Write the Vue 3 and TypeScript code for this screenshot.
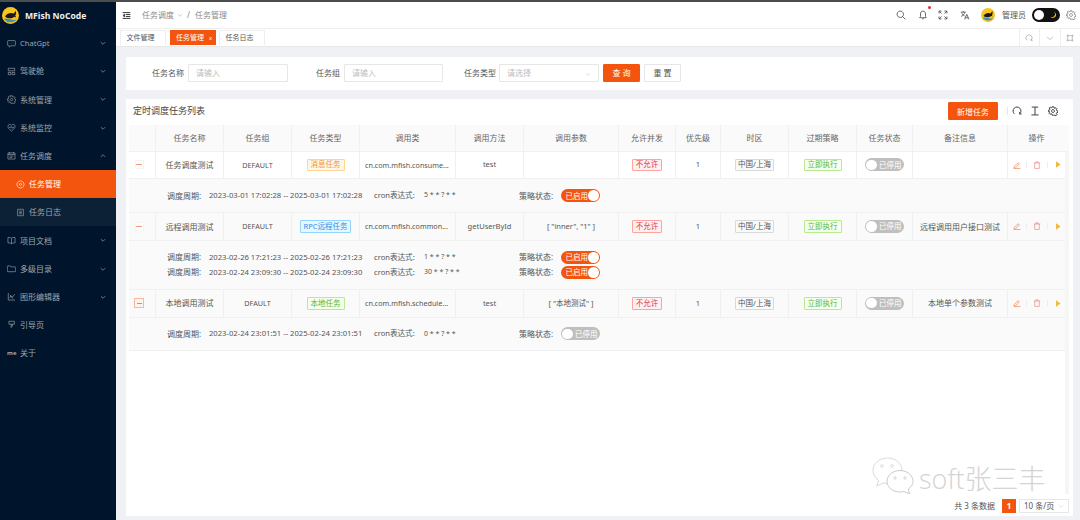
<script setup lang="ts">
interface MenuItem { label: string; icon: string; arrow?: 'down' | 'up'; kind?: 'active' | 'sub' }
interface Detail { range: string; cron: string; on: boolean }
interface Row {
  name: string; group: string; tag: string; tagKind: string; cls: string; method: string;
  params: string; note: string; boxed: boolean; stripe: boolean; details: Detail[]
}
const icons: Record<string, string> = {
  chat: 'M2 2.5h10a1 1 0 0 1 1 1v6a1 1 0 0 1-1 1H6l-2.5 2v-2H2a1 1 0 0 1-1-1v-6a1 1 0 0 1 1-1zM4.5 6.5h.5M7 6.5h.5M9.5 6.5h.5',
  dash: 'M2 2h10v4H2zM2 8.5h4V12H2zM8 8.5h4V12H8z',
  gear: 'M6 1h2l.4 1.700 1.300.5 1.500-.9 1.400 1.400-.9 1.500.5 1.300 1.700.5v2l-1.700.4-.5 1.300.9 1.500-1.400 1.400-1.500-.9-1.300.5L8 13H6l-.4-1.700-1.300-.5-1.500.9-1.400-1.400.9-1.500-.5-1.300L.6 8V6l1.700-.4.5-1.300-.9-1.500 1.400-1.400 1.500.9 1.300-.5zM7 5a2 2 0 1 0 .01 0z',
  heart: 'M7 12.5C3 9.5 1.5 7.500 1.500 5.200A3 3 0 0 1 7 3.500a3 3 0 0 1 5.500 1.700C12.500 7.500 11 9.500 7 12.500zM3 6.800h2.500l1-1.500 1.500 3 1-1.500H11',
  cal: 'M1.500 3h11v9.500h-11zM4 1.500V4M10 1.500V4M1.500 5.500h11M4 8h6M4 10.300h4',
  target: 'M7 1.500a5.500 5.500 0 1 0 .01 0zM7 5.500a1.500 1.500 0 1 0 .01 0z',
  log: 'M2.500 2h9v10h-9zM5 5h4M5 7h4M5 9h4',
  book: 'M7 3.500C5.500 2.300 3.500 2 1.500 2.300v8.500c2-.3 4 0 5.500 1.200 1.500-1.200 3.500-1.500 5.500-1.200V2.300C10.500 2 8.500 2.300 7 3.500zM7 3.500V12',
  folder: 'M1.500 3h4l1.200 1.500h5.800a1 1 0 0 1 1 1V11a1 1 0 0 1-1 1h-11a1 1 0 0 1-1-1V3.500z',
  chart: 'M2 1.500V12.500H12.500M4 9l2.500-3 2 2L12 3.500M9 10.500l-4-6',
  guide: 'M3 2h8.500v4.500H3zM6.500 6.500V12.500M8.500 6.500V9.500H6.500',
  menu: 'M1 2.500h12M6 5.500h7M6 8.500h7M1 11.500h12M4 5L1.500 7 4 9z',
  search: 'M6 1.500a4.500 4.500 0 1 0 .01 0zM9.300 9.300L13 13',
  bell: 'M7 1.500c-2.500 0-3.500 2-3.500 4V9L2.300 10.800h9.400L10.500 9V5.500c0-2-1-4-3.500-4zM5.800 12.300h2.400',
  full: 'M1.500 5V1.500H5M1.500 1.500L5 5M12.500 5V1.500H9M12.500 1.500L9 5M1.500 9v3.500H5M1.500 12.500L5 9M12.500 9v3.500H9M12.500 12.500L9 9',
  lang: 'M1 3h7M4.500 1.500V3M7 3C6.300 5.500 4 8 1.500 9M2.500 4.500C3.500 6.500 5 7.700 6.500 8.500M6.500 13l3-7 3 7M7.500 11h4',
  redo: 'M3.300 11A5.500 5.500 0 1 1 10.700 11M10.700 8.500V11.300H13.300',
  down: 'M2 5l5 5 5-5',
  frame: 'M3 3h8v8H3zM1 3h2V1M13 3h-2V1M1 11h2v2M13 11h-2v2',
  height: 'M2.500 1.500h9M7 1.500v11M2 12.500h10',
  edit: 'M2 9.800L8.800 3l2.200 2.200-6.800 6.800H2zM1 13.300h12',
  trash: 'M1.500 3.500h11M5 3.500V1.500h4v2M3 3.500v9.500h8V3.500'
}
const menu: MenuItem[] = [
  { label: 'ChatGpt', icon: 'chat', arrow: 'down' },
  { label: '驾驶舱', icon: 'dash', arrow: 'down' },
  { label: '系统管理', icon: 'gear', arrow: 'down' },
  { label: '系统监控', icon: 'heart', arrow: 'down' },
  { label: '任务调度', icon: 'cal', arrow: 'up' },
  { label: '任务管理', icon: 'target', kind: 'active' },
  { label: '任务日志', icon: 'log', kind: 'sub' },
  { label: '项目文档', icon: 'book', arrow: 'down' },
  { label: '多级目录', icon: 'folder', arrow: 'down' },
  { label: '图形编辑器', icon: 'chart', arrow: 'down' },
  { label: '引导页', icon: 'guide' },
  { label: '关于', icon: 'me' }
]
const columns: string[] = ['', '任务名称', '任务组', '任务类型', '调用类', '调用方法', '调用参数', '允许并发', '优先级', '时区', '过期策略', '任务状态', '备注信息', '操作']
const rows: Row[] = [
  { name: '任务调度测试', group: 'DEFAULT', tag: '消息任务', tagKind: 'orange', cls: 'cn.com.mfish.consume...', method: 'test', params: '', note: '', boxed: false, stripe: false,
    details: [{ range: '2023-03-01 17:02:28 -- 2025-03-01 17:02:28', cron: '5 * * ? * *', on: true }] },
  { name: '远程调用测试', group: 'DEFAULT', tag: 'RPC远程任务', tagKind: 'blue', cls: 'cn.com.mfish.common...', method: 'getUserById', params: '[ "inner", "1" ]', note: '远程调用用户接口测试', boxed: false, stripe: true,
    details: [
      { range: '2023-02-26 17:21:23 -- 2025-02-26 17:21:23', cron: '1 * * ? * *', on: true },
      { range: '2023-02-24 23:09:30 -- 2025-02-24 23:09:30', cron: '30 * * ? * *', on: true }
    ] },
  { name: '本地调用测试', group: 'DFAULT', tag: '本地任务', tagKind: 'green', cls: 'cn.com.mfish.schedule...', method: 'test', params: '[ "本地测试" ]', note: '本地单个参数测试', boxed: true, stripe: true,
    details: [{ range: '2023-02-24 23:01:51 -- 2025-02-24 23:01:51', cron: '0 * * ? * *', on: false }] }
]
</script>

<template>
  <div class="page">
    <aside class="side">
      <div class="logo">
        <svg class="fish" viewBox="0 0 18 18">
          <circle cx="9" cy="9" r="9" fill="#f7c51e" />
          <path d="M2 13c2.500-1.300 4-1 7 0s5 .8 7-.3A9 9 0 0 1 2 13z" fill="#3e8fc2" />
          <path d="M3.500 9.500C5.500 6.500 9.500 5.500 12.500 7l2-3 .5 3.500-1 1.500 1 2-2-.8c-2.500 2-6 2.300-9.500.3z" fill="#1a1a1a" />
        </svg>
        <span class="logo-text">MFish NoCode</span>
      </div>
      <div v-for="m in menu" :key="m.label" class="mi" :class="m.kind">
        <span v-if="m.icon === 'me'" class="me">me</span>
        <svg v-else class="mi-icon" viewBox="0 0 14 14"><path :d="icons[m.icon]" /></svg>
        <span class="mi-label" :class="{ latin: m.label === 'ChatGpt' }">{{ m.label }}</span>
        <svg v-if="m.arrow" class="mi-arrow" :class="{ up: m.arrow === 'up' }" viewBox="0 0 14 14"><path :d="icons.down" /></svg>
      </div>
    </aside>

    <main class="main">
      <header class="top">
        <svg class="ic9 menu-ic" viewBox="0 0 14 14"><path :d="icons.menu" /></svg>
        <span class="crumb">任务调度</span>
        <svg class="crumb-arrow" viewBox="0 0 14 14"><path :d="icons.down" /></svg>
        <span class="crumb slash">/</span>
        <span class="crumb">任务管理</span>
        <div class="top-right">
          <svg class="tool t-search" viewBox="0 0 14 14"><path :d="icons.search" /></svg>
          <span class="bell-wrap">
            <svg class="tool" viewBox="0 0 14 14"><path :d="icons.bell" /></svg>
            <i class="dot"></i>
          </span>
          <svg class="tool t-full" viewBox="0 0 14 14"><path :d="icons.full" /></svg>
          <svg class="tool t-lang" viewBox="0 0 14 14"><path :d="icons.lang" /></svg>
          <svg class="avatar" viewBox="0 0 18 18">
            <circle cx="9" cy="9" r="9" fill="#f7c51e" />
            <path d="M2 13c2.500-1.300 4-1 7 0s5 .8 7-.3A9 9 0 0 1 2 13z" fill="#3e8fc2" />
            <path d="M3.500 9.500C5.500 6.500 9.500 5.500 12.500 7l2-3 .5 3.500-1 1.500 1 2-2-.8c-2.500 2-6 2.300-9.500.3z" fill="#1a1a1a" />
          </svg>
          <span class="admin">管理员</span>
          <span class="theme">
            <i class="theme-knob"></i>
            <svg class="moon" viewBox="0 0 14 14"><path d="M8.500 1.500A5.500 5.500 0 1 1 2 9.500 5 5 0 0 0 8.500 1.500z" fill="#f7c51e" /></svg>
          </span>
          <svg class="tool t-gear" viewBox="0 0 14 14"><path :d="icons.gear" /></svg>
        </div>
      </header>

      <nav class="tabs">
        <span class="tab">文件管理</span>
        <span class="tab on">任务管理<em>x</em></span>
        <span class="tab">任务日志</span>
        <div class="tab-tools">
          <span><svg viewBox="0 0 14 14"><path :d="icons.redo" /></svg></span>
          <span><svg viewBox="0 0 14 14"><path :d="icons.down" /></svg></span>
          <span><svg viewBox="0 0 14 14"><path :d="icons.frame" /></svg></span>
        </div>
      </nav>

      <div class="content">
        <section class="filter">
          <label class="l1">任务名称</label>
          <span class="field">请输入</span>
          <label class="l2">任务组</label>
          <span class="field f2">请输入</span>
          <label class="l3">任务类型</label>
          <span class="field sel">请选择<svg viewBox="0 0 14 14"><path :d="icons.down" /></svg></span>
          <button class="btn primary">查 询</button>
          <button class="btn">重 置</button>
        </section>

        <section class="card">
          <div class="toolbar">
            <h2>定时调度任务列表</h2>
            <button class="btn primary add">新增任务</button>
            <i class="tb-sep"></i>
            <svg class="tb-ic" viewBox="0 0 14 14"><path :d="icons.redo" /></svg>
            <svg class="tb-ic" viewBox="0 0 14 14"><path :d="icons.height" /></svg>
            <svg class="tb-ic" viewBox="0 0 14 14"><path :d="icons.gear" /></svg>
          </div>

          <div class="thead">
            <div v-for="(c, i) in columns" :key="i" class="th">{{ c }}</div>
          </div>

          <div class="tbody">
            <template v-for="r in rows" :key="r.name">
              <div class="tr" :class="{ stripe: r.stripe }">
                <div class="td"><span class="exp" :class="{ boxed: r.boxed }"></span></div>
                <div class="td">{{ r.name }}</div>
                <div class="td en narrow">{{ r.group }}</div>
                <div class="td"><span class="tag" :class="r.tagKind">{{ r.tag }}</span></div>
                <div class="td en narrow cls">{{ r.cls }}</div>
                <div class="td en">{{ r.method }}</div>
                <div class="td en">{{ r.params }}</div>
                <div class="td"><span class="tag red">不允许</span></div>
                <div class="td en">1</div>
                <div class="td"><span class="tag plain">中国/上海</span></div>
                <div class="td"><span class="tag green">立即执行</span></div>
                <div class="td"><span class="sw off"><i></i><b>已停用</b></span></div>
                <div class="td">{{ r.note }}</div>
                <div class="td acts">
                  <svg class="a-ic edit" viewBox="0 0 14 14"><path :d="icons.edit" /></svg>
                  <i class="a-sep"></i>
                  <svg class="a-ic trash" viewBox="0 0 14 14"><path :d="icons.trash" /></svg>
                  <i class="a-sep"></i>
                  <svg class="a-play" viewBox="0 0 6 8"><path d="M0 0l5.500 4L0 8z" /></svg>
                </div>
              </div>
              <div class="expand" :class="{ two: r.details.length > 1 }">
                <div v-for="d in r.details" :key="d.range" class="dr">
                  <span>调度周期:</span>
                  <span class="date">{{ d.range }}</span>
                  <span class="cron-l">cron表达式:</span>
                  <span class="cron-v">{{ d.cron }}</span>
                  <span>策略状态:</span>
                  <span class="sw" :class="{ off: !d.on }"><i></i><b>{{ d.on ? '已启用' : '已停用' }}</b></span>
                </div>
              </div>
            </template>
          </div>

          <div class="pager">
            <span>共 3 条数据</span>
            <span class="page-no">1</span>
            <span class="page-size">10 条/页<svg viewBox="0 0 14 14"><path :d="icons.down" /></svg></span>
          </div>

          <div class="mark">
            <svg class="mark-ic" viewBox="0 0 42 37">
              <path d="M15.500 1C7.500 1 1 6.500 1 13.500c0 4 2.200 7.500 5.500 9.800L5 29l6.500-3c1.300.3 2.600.5 4 .5 8 0 14.500-5.800 14.500-13S23.500 1 15.500 1z" fill="#fff" stroke="#cfcfcf" stroke-width=".8" />
              <path d="M28 13.500c-7.200 0-13 4.800-13 10.800s5.800 10.700 13 10.700c1.300 0 2.500-.2 3.700-.5l6 2.300-1.500-4.800c3-2 4.800-4.500 4.800-7.700 0-6-5.800-10.800-13-10.800z" fill="#fff" stroke="#bdbdbd" stroke-width=".8" />
              <circle cx="10" cy="9" r="1.400" fill="none" stroke="#c9c9c9" stroke-width=".6" />
              <circle cx="20" cy="9" r="1.400" fill="none" stroke="#c9c9c9" stroke-width=".6" />
              <circle cx="23" cy="21" r="1.200" fill="none" stroke="#bdbdbd" stroke-width=".6" />
              <circle cx="33" cy="21" r="1.200" fill="none" stroke="#bdbdbd" stroke-width=".6" />
            </svg>
            <span class="mark-text">soft张三丰</span>
          </div>
        </section>
      </div>
    </main>
  </div>
</template>

<style>
html, body { margin: 0; background: #fff; }
</style>

<style scoped>
.page {
  width: 1080px; height: 520px; display: flex; overflow: hidden; box-sizing: border-box;
  border-top: 2px solid #4d4d4d; background: #eff1f5; color: #555;
  font: 8px/1.2 "Noto Sans", "Noto Sans CJK SC", sans-serif;
}
svg { display: block; fill: none; stroke: currentColor; stroke-width: 1.1; }
.side { width: 116px; flex: none; background: #00152b; color: #9ea6ae; }
.logo { height: 27px; display: flex; align-items: center; padding-left: 2px; gap: 6px; }
.fish { width: 17px; height: 17px; stroke: none; }
.fish path, .fish circle, .avatar path, .avatar circle { stroke: none; }
.logo-text { font: 700 8.600px "Open Sans", sans-serif; color: #eef0f2; }
.mi { height: 28.200px; display: flex; align-items: center; padding-left: 7px; position: relative; font-size: 8px; }
.mi-icon { width: 9px; height: 9px; margin-right: 4px; stroke-width: 1; }
.mi-label.latin { font-size: 7.600px; }
.mi-arrow { position: absolute; right: 10px; top: 11px; width: 6px; height: 6px; stroke-width: 1.600; }
.mi-arrow.up { transform: rotate(180deg); }
.me { width: 9px; margin-right: 4px; font: 700 6px "Open Sans", sans-serif; }
.mi.sub, .mi.active { padding-left: 16px; }
.mi.sub { background: #0c2135; }
.mi.active { background: #f3550f; color: #fff; }
.mi.sub .mi-icon, .mi.active .mi-icon { margin-right: 4.500px; margin-left: -.5px; }

.main { flex: 1; min-width: 0; display: flex; flex-direction: column; }
.top { height: 26px; flex: none; background: #fff; display: flex; align-items: center; border-bottom: 1px solid #eee; padding-left: 6px; color: #8a8a8a; }
.menu-ic { color: #222; width: 9px; height: 9px; margin-right: 11px; stroke-width: 1.400; }
.crumb { font-size: 8px; }
.crumb-arrow { width: 6px; height: 6px; margin: 0 4px 0 3px; color: #999; }
.slash { margin-right: 5px; }
.top-right { margin-left: auto; display: flex; align-items: center; color: #444; }
.tool { width: 10px; height: 10px; }
.bell-wrap { position: relative; margin-left: 12px; }
.dot { position: absolute; right: -3px; top: -4px; width: 3px; height: 3px; border-radius: 50%; background: #f5222d; }
.t-full { margin-left: 10px; }
.t-lang { margin-left: 12px; }
.avatar { width: 14px; height: 14px; margin-left: 11px; }
.admin { margin-left: 7px; font-size: 8px; color: #555; }
.theme { width: 28px; height: 14px; border-radius: 7px; background: #111; margin-left: 6px; position: relative; display: block; }
.theme-knob { position: absolute; left: 2px; top: 2px; width: 10px; height: 10px; border-radius: 50%; background: #fff; }
.moon { position: absolute; right: 3px; top: 3px; width: 8px; height: 8px; stroke: none; }
.moon path { stroke: none; }
.t-gear { margin: 0 4px 0 6px; color: #777; }

.tabs { height: 18px; flex: none; background: #fff; display: flex; align-items: flex-end; padding: 0 0 1px 4px; gap: 3.500px; border-bottom: 1px solid #e8e8e8; box-sizing: border-box; position: relative; }
.tab { width: 46px; height: 15.500px; box-sizing: border-box; border: 1px solid #eee; border-bottom: 0; padding-left: 5.500px; display: flex; align-items: center; font-size: 7px; color: #555; white-space: nowrap; }
.tab.on { background: #f3550f; border-color: #f3550f; color: #fff; position: relative; }
.tab em { font: 6px "Open Sans", sans-serif; margin-left: 5px; }
.tab-tools { position: absolute; right: 0; top: 0; bottom: 0; display: flex; color: #999; }
.tab-tools span { width: 20.500px; border-left: 1px solid #eee; display: flex; align-items: center; justify-content: center; box-sizing: border-box; }
.tab-tools svg { width: 8px; height: 8px; }

.content { flex: 1; min-height: 0; display: flex; flex-direction: column; padding: 10px 7px 4px 10px; gap: 9.500px; }
.filter { height: 32.500px; flex: none; background: #fff; display: flex; align-items: center; position: relative; padding-bottom: 1px; box-sizing: border-box; }
.filter label { color: #555; font-size: 8px; text-align: right; }
.l1 { margin-left: 26px; width: 32px; margin-right: 4px; }
.l2 { margin-left: 28px; width: 24px; margin-right: 4px; }
.l3 { margin-left: 21px; width: 32px; margin-right: 3px; }
.field { width: 100px; height: 18px; box-sizing: border-box; border: 1px solid #e6e6e6; border-radius: 1px; display: flex; align-items: center; padding-left: 7px; color: #bdbdbd; font-size: 8px; }
.f2 { width: 99px; }
.sel { position: relative; }
.sel svg { position: absolute; right: 7px; top: 6px; width: 6px; height: 6px; color: #bbb; }
.btn { height: 18px; width: 37px; padding: 0; border: 1px solid #e6e6e6; background: #fff; color: #555; font: 8px "Noto Sans", "Noto Sans CJK SC", sans-serif; border-radius: 1px; margin-left: 4px; }
.btn.primary { background: #f3550f; border-color: #f3550f; color: #fff; }
.filter .primary { margin-left: 4px; }

.card { flex: 1; min-height: 0; background: #fff; padding: 0 4px 0 3px; display: flex; flex-direction: column; position: relative; }
.toolbar { height: 26px; flex: none; display: flex; align-items: center; padding: 0 0 2px 4px; color: #333; box-sizing: border-box; }
.toolbar h2 { margin: 0 auto 0 0; font-size: 9px; font-weight: 400; color: #444; }
.add { width: 50px; height: 18px; margin: 0; }
.tb-sep { width: 1px; height: 8px; background: #e5e5e5; margin: 0 0 0 9px; }
.tb-ic { width: 10px; height: 10px; margin-left: 4px; margin-right: 4px; color: #333; stroke-width: 1.300; }
.tb-ic:last-child { margin-right: 11px; }

.thead, .tr { display: grid; grid-template-columns: 27px 68px 68px 68px 96px 68px 95px 57px 45px 68px 68px 56px 95px 1fr; }
.thead { height: 26.500px; flex: none; background: #fafafa; border-bottom: 1px solid #f0f0f0; box-sizing: border-box; }
.th { border-right: 1px solid #f0f0f0; display: flex; align-items: center; justify-content: center; color: #666; font-size: 8px; }
.th:last-child { border-right: 0; padding-right: 4px; }
.tbody { flex: 1; min-height: 0; border-right: 4px solid #f6f6f6; box-sizing: border-box; }
.tr { height: 27.800px; box-sizing: border-box; border-bottom: 1px solid #f0f0f0; }
.tr.stripe, .expand { background: #fafafa; }
.td { border-right: 1px solid #f0f0f0; display: flex; align-items: center; justify-content: center; font-size: 8px; color: #555; white-space: nowrap; overflow: hidden; }
.td:last-child { border-right: 0; }
.en { font-size: 7.500px; }
.en.narrow { font-size: 7.200px; }
.td.cls { justify-content: flex-start; padding-left: 5px; }
.exp { width: 9px; height: 9px; box-sizing: border-box; border: 1px solid #f4f4f4; background: #fff; position: relative; display: block; margin-right: 6px; }
.exp::after { content: ""; position: absolute; left: .5px; right: .5px; top: 3px; height: 1px; background: #f9997a; }
.exp.boxed { width: 10px; height: 10px; border-color: #f9b79b; background: #fdf3ee; }
.exp.boxed::after { top: 3.500px; left: 1.500px; right: 1.500px; background: #e8885f; }
.tag { height: 12.700px; display: inline-flex; align-items: center; padding: 0 3px; box-sizing: border-box; border: 1px solid; border-radius: 1px; font-size: 7.500px; }
.orange { background: #fff7e6; border-color: #ffd591; color: #f0953a; }
.blue { background: #e6f7ff; border-color: #91d5ff; color: #2f8fe8; }
.green { background: #f6ffed; border-color: #b7eb8f; color: #5ab52d; }
.red { background: #fff1f0; border-color: #ffa39e; color: #e0393e; }
.plain { background: #fafafa; border-color: #d9d9d9; color: #555; padding: 0 2.500px; }
.sw { width: 39px; height: 13px; border-radius: 7px; background: #f3550f; position: relative; display: block; }
.sw i { position: absolute; right: 1.250px; top: 1.250px; width: 10.500px; height: 10.500px; border-radius: 50%; background: #fff; }
.sw b { position: absolute; left: 4.500px; top: 1.500px; font-weight: 400; font-size: 7.500px; line-height: 10px; color: #fff; }
.sw.off { background: #bfbfbf; }
.sw.off i { left: 1.250px; right: auto; }
.sw.off b { left: 14px; }
.acts { justify-content: flex-start; padding-left: 5px; }
.a-ic { width: 8px; height: 8px; stroke-width: 1.200; flex: none; }
.edit { color: #f27a4c; }
.trash { color: #ef8585; }
.a-sep { width: 1px; height: 6px; background: #eee; flex: none; }
.edit + .a-sep { margin: 0 6px 0 5px; }
.trash + .a-sep { margin: 0 8px 0 6px; }
.a-play { width: 5px; height: 7px; fill: #f5b83d; stroke: none; flex: none; }
.expand { height: 33.700px; box-sizing: border-box; padding-left: 38px; display: flex; flex-direction: column; justify-content: center; gap: 2px; border-bottom: 1px solid #f0f0f0; }
.expand.two { height: 49px; }
.dr { display: grid; grid-template-columns: 42px 165px 50px 95px 42px 39px; align-items: center; height: 13px; font-size: 8px; color: #555; white-space: nowrap; }
.date { font-size: 7.650px; }
.cron-l { font-size: 7.600px; }
.cron-v { font-size: 7px; }

.pager { height: 22px; flex: none; display: flex; align-items: center; justify-content: flex-end; font-size: 8px; color: #555; padding-top: 2px; box-sizing: border-box; }
.page-no { width: 14px; height: 14px; background: #f3550f; color: #fff; display: flex; align-items: center; justify-content: center; margin: 0 3px 0 7px; font-weight: 700; }
.page-size { width: 50px; height: 14px; box-sizing: border-box; border: 1px solid #e6e6e6; display: flex; align-items: center; padding-left: 4px; position: relative; }
.page-size svg { position: absolute; right: 4px; top: 3px; width: 6px; height: 6px; color: #ccc; }
.mark { position: absolute; left: 746px; top: 355px; display: flex; align-items: center; gap: 5px; }
.mark-ic { width: 42px; height: 37px; stroke: none; }
.mark-text { font: 300 27px "Open Sans", "Noto Sans CJK SC", sans-serif; color: #d4d4d4; text-shadow: 0 1px 0 #fff; margin-top: 4px; }
</style>
